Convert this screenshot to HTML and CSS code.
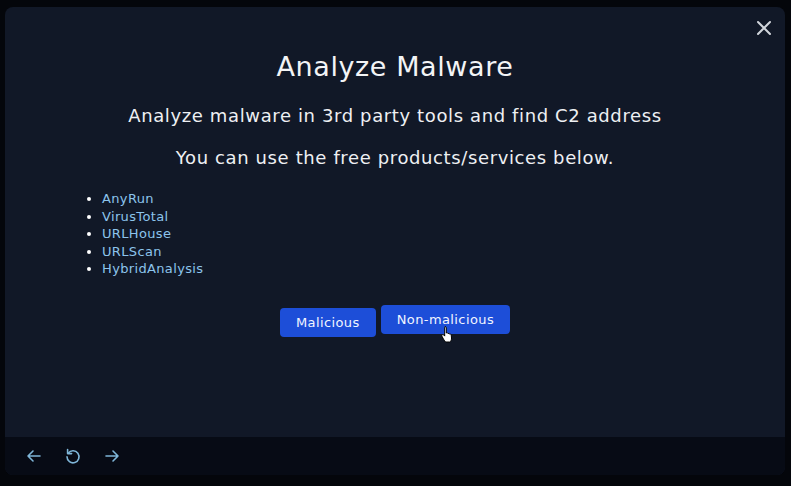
FILE: index.html
```html
<!DOCTYPE html>
<html>
<head>
<meta charset="utf-8">
<link rel="stylesheet" href="styles.css">
</head>
<body>
<div class="app">
  <div class="panel">
    <div class="body">
      <button class="close" aria-label="Close">
        <svg width="16" height="16" viewBox="0 0 16 16"><path d="M2 2L14 14M14 2L2 14" stroke="#d1d5db" stroke-width="2" stroke-linecap="round"/></svg>
      </button>
      <h1 class="title">Analyze Malware</h1>
      <p class="sub">Analyze malware in 3rd party tools and find C2 address</p>
      <p class="sub sub2">You can use the free products/services below.</p>
      <ul class="links">
        <li>AnyRun</li>
        <li>VirusTotal</li>
        <li>URLHouse</li>
        <li>URLScan</li>
        <li>HybridAnalysis</li>
      </ul>
      <div class="actions">
        <button class="btn">Malicious</button>
        <button class="btn hover">Non-malicious
          <svg class="cursor" width="14" height="18" viewBox="0 0 14 18"><path d="M4 1.5c.8 0 1.3.6 1.3 1.3v5.2l.3-.1c.7-.2 1.3.1 1.5.6.6-.3 1.3-.1 1.6.5.6-.2 1.3.1 1.5.7l.3 3.3c.1 1.8-.6 3.3-1.6 4H4.8c-.6-.5-1.600-1.800-2.400-3L1 11.300c-.4-.6-.2-1.300.4-1.600.5-.3 1.100-.1 1.400.3l.9 1.100V2.800c0-.7.1-1.300.3-1.300z" fill="#fff" stroke="#000" stroke-width="1"/></svg>
        </button>
      </div>
    </div>
    <div class="footer">
      <svg width="18" height="18" viewBox="0 0 18 18"><path d="M15 9H3M8 4L3 9l5 5" fill="none" stroke="#7fb6d8" stroke-width="1.6" stroke-linecap="round" stroke-linejoin="round"/></svg>
      <svg width="18" height="18" viewBox="0 0 18 18"><path d="M4.2 6.2A6 6 0 1 1 3 9.8" fill="none" stroke="#7fb6d8" stroke-width="1.6" stroke-linecap="round"/><path d="M3.6 2.6v4h4" fill="none" stroke="#7fb6d8" stroke-width="1.6" stroke-linecap="round" stroke-linejoin="round"/></svg>
      <svg width="18" height="18" viewBox="0 0 18 18"><path d="M3 9h12M10 4l5 5-5 5" fill="none" stroke="#7fb6d8" stroke-width="1.6" stroke-linecap="round" stroke-linejoin="round"/></svg>
    </div>
  </div>
</div>
</body>
</html>
```

FILE: styles.css
```css
* { box-sizing: border-box; }
html, body { margin: 0; padding: 0; }
body {
  background: #04060b;
  font-family: "DejaVu Sans", "Open Sans", sans-serif;
  width: 791px;
  height: 486px;
  overflow: hidden;
}
.app {
  padding: 7px 6px 11px 5px;
  height: 486px;
}
.panel {
  height: 468px;
  display: flex;
  flex-direction: column;
  border-radius: 8px;
  overflow: hidden;
  background: #111827;
}
.body {
  position: relative;
  flex: 1;
  display: flex;
  flex-direction: column;
  align-items: center;
  padding-top: 44px;
}
.close {
  position: absolute;
  top: 13px;
  right: 13px;
  background: none;
  border: 0;
  padding: 0;
  width: 16px;
  height: 16px;
  display: flex;
}
.title {
  margin: 0;
  color: #f3f4f6;
  font-size: 27px;
  font-weight: 500;
  line-height: 32px;
  letter-spacing: 0.6px;
}
.sub {
  margin: 20px 0 0;
  color: #eef0f3;
  font-size: 18px;
  line-height: 26px;
  letter-spacing: 0.62px;
}
.sub2 { margin-top: 16px; }
.links {
  align-self: stretch;
  margin: 19px 0 0;
  padding-left: 97px;
  color: #8cc4ec;
  font-size: 13px;
  line-height: 17.5px;
  letter-spacing: 0.35px;
}
.links li::marker { color: #ffffff; }
.actions {
  display: flex;
  gap: 5px;
  margin-top: 27px;
  align-items: flex-start;
}
.btn {
  position: relative;
  background: #1d4ed8;
  color: #f1f5ff;
  border: 0;
  border-radius: 4px;
  font-family: inherit;
  font-size: 13px;
  letter-spacing: 0.4px;
  height: 29px;
  padding: 0 16px;
  margin-top: 3px;
}
.btn.hover { margin-top: 0; }
.cursor {
  position: absolute;
  left: 60px;
  top: 20px;
}
.footer {
  height: 38px;
  background: #070b15;
  display: flex;
  align-items: center;
  gap: 21px;
  padding: 0 0 0 20px;
}
```
